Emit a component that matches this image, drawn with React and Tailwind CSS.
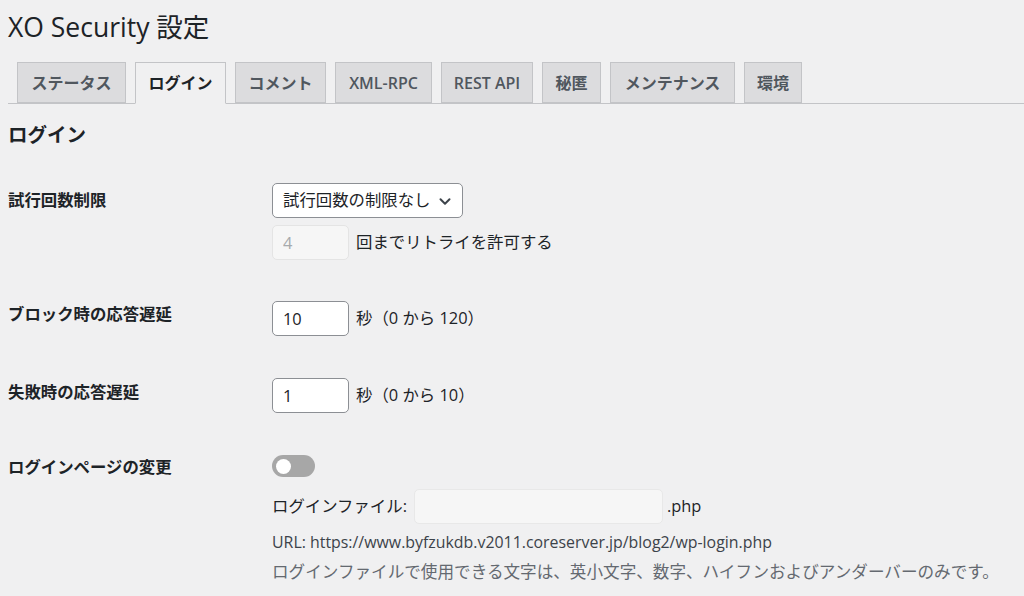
import React from "react"

const TABS = [
  { label: "ステータス", width: "w-[109px]" },
  { label: "ログイン", width: "w-[91px]", active: true },
  { label: "コメント", width: "w-[91px]" },
  { label: "XML-RPC", width: "w-[97px]" },
  { label: "REST API", width: "w-[92px]" },
  { label: "秘匿", width: "w-[59px]" },
  { label: "メンテナンス", width: "w-[125px]" },
  { label: "環境", width: "w-[58px]" },
]

const FONT = { fontFamily: '"Open Sans", "Noto Sans CJK JP", sans-serif' }

function Label({ children, pt }) {
  return (
    <div className={`w-[264px] shrink-0 text-[16.4px] font-bold leading-[24px] ${pt}`}>
      {children}
    </div>
  )
}

function NumberInput({ value, disabled }) {
  return (
    <input
      type="text"
      defaultValue={value}
      disabled={disabled}
      className={`w-[77px] h-[35px] rounded-[5px] px-[10px] text-[16.4px] outline-none ${
        disabled
          ? "bg-[#f6f6f6] border border-[#e4e4e4] text-[#a7aaad]"
          : "bg-white border border-[#8c8f94] text-[#1d2327]"
      }`}
    />
  )
}

export default function App() {
  return (
    <div className="min-h-screen bg-[#f0f0f1] text-[#1d2327] pl-2" style={FONT}>
      {/* TITLE */}
      <h1 className="text-[26.5px] leading-[36px] pt-[9px] font-normal">XO Security 設定</h1>

      {/* TABS */}
      <nav className="mt-[17px] flex gap-[9px] pl-[9px] border-b border-[#c3c4c7]">
        {TABS.map((tab) => (
          <div
            key={tab.label}
            className={`${tab.width} h-[41px] -mb-px flex items-center justify-center border border-[#c3c4c7] text-[16px] font-semibold ${
              tab.active
                ? "bg-[#f0f0f1] text-[#1d2327] border-b-[#f0f0f1] h-[42px]"
                : "bg-[#dcdcde] text-[#50575e]"
            }`}
          >
            {tab.label}
          </div>
        ))}
      </nav>

      {/* SECTION */}
      <h2 className="text-[19.5px] font-bold leading-[26px] mt-[18px]">ログイン</h2>

      {/* 試行回数制限 */}
      <div className="flex mt-[35px]">
        <Label pt="pt-[5px]">試行回数制限</Label>
        <div className="flex flex-col">
          <div className="w-[191px] h-[35px] rounded-[5px] border border-[#8c8f94] bg-white flex items-center justify-between pl-[10px] pr-[8px] text-[16.4px]">
            <span>試行回数の制限なし</span>
            <svg width="18" height="18" viewBox="0 0 20 20" fill="none" stroke="#3c434a" strokeWidth="2.2" strokeLinecap="round" strokeLinejoin="round">
              <path d="M5 8l5 5 5-5" />
            </svg>
          </div>
          <div className="flex items-center gap-[7px] mt-[7px]">
            <NumberInput value="4" disabled />
            <span className="text-[16.4px]">回までリトライを許可する</span>
          </div>
        </div>
      </div>

      {/* ブロック時の応答遅延 */}
      <div className="flex mt-[41px]">
        <Label pt="pt-[1px]">ブロック時の応答遅延</Label>
        <div className="flex items-center gap-[7px]">
          <NumberInput value="10" />
          <span className="text-[16.4px]">秒（0 から 120）</span>
        </div>
      </div>

      {/* 失敗時の応答遅延 */}
      <div className="flex mt-[42px]">
        <Label pt="pt-[2px]">失敗時の応答遅延</Label>
        <div className="flex items-center gap-[7px]">
          <NumberInput value="1" />
          <span className="text-[16.4px]">秒（0 から 10）</span>
        </div>
      </div>

      {/* ログインページの変更 */}
      <div className="flex mt-[42px]">
        <Label pt="pt-0">ログインページの変更</Label>
        <div className="flex flex-col">
          <div className="w-[43px] h-[22px] rounded-full bg-[#a7a7a7] flex items-center pl-[4px]">
            <div className="w-[15px] h-[15px] rounded-full bg-white" />
          </div>
          <div className="flex items-center mt-[12px] text-[16.4px]">
            <span className="mr-[7px]">ログインファイル:</span>
            <div className="w-[249px] h-[35px] rounded-[5px] bg-[#f6f6f6] border border-[#e8e8e8]" />
            <span className="ml-[4px]">.php</span>
          </div>
          <p className="mt-[5px] text-[15.9px] leading-[26px] text-[#3c434a]">
            URL: https://www.byfzukdb.v2011.coreserver.jp/blog2/wp-login.php
          </p>
          <p className="mt-[4px] text-[16.6px] leading-[26px] text-[#646970]">
            ログインファイルで使用できる文字は、英小文字、数字、ハイフンおよびアンダーバーのみです。
          </p>
        </div>
      </div>
    </div>
  )
}
